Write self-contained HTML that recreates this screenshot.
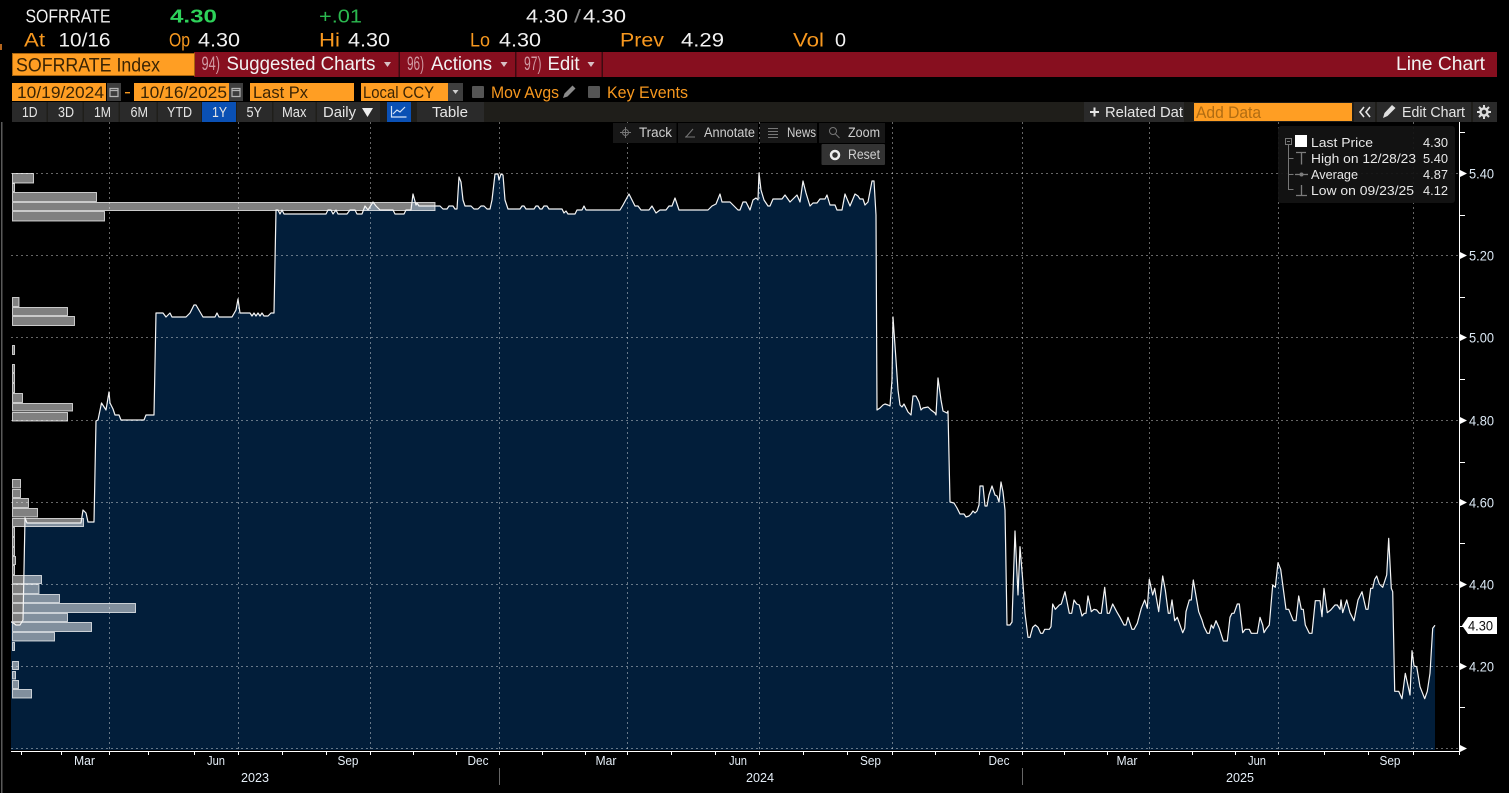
<!DOCTYPE html>
<html><head><meta charset="utf-8"><style>
html,body{margin:0;padding:0;background:#000;width:1509px;height:793px;overflow:hidden}
svg{display:block}
text{font-family:"Liberation Sans",sans-serif}
.o{fill:#f7981f}.w{fill:#f2f2f2}.d{fill:#3a2404}.t{fill:#e6e6e6;font-size:15px}.m{fill:#d09aa3}.c{fill:#cfcfcf;font-size:13.5px}
.l{fill:#e8e8e8;font-size:13px}.a{fill:#e4edf6;font-size:13px}.y{fill:#d9e6f2;font-size:14px}
</style></head><body>
<svg width="1509" height="793" viewBox="0 0 1509 793" xmlns="http://www.w3.org/2000/svg">
<rect width="1509" height="793" fill="#000"/>
<rect x="1" y="122" width="1.5" height="671" fill="#5a5a5a"/>
<rect x="0" y="44" width="2" height="6" fill="#b5651d"/>

<!-- header rows -->
<g font-size="18.500">
<text x="25.500" y="22.500" class="w" textLength="85" lengthAdjust="spacingAndGlyphs">SOFRRATE</text>
<text x="170" y="22.500" fill="#2ed25a" font-weight="bold" textLength="47" lengthAdjust="spacingAndGlyphs">4.30</text>
<text x="319" y="22.500" fill="#2bb84f" textLength="43" lengthAdjust="spacingAndGlyphs">+.01</text>
<text x="526" y="22.500" class="w" textLength="42" lengthAdjust="spacingAndGlyphs">4.30</text>
<text x="574" y="22.500" fill="#888" textLength="7" lengthAdjust="spacingAndGlyphs">/</text>
<text x="583" y="22.500" class="w" textLength="43" lengthAdjust="spacingAndGlyphs">4.30</text>
</g>
<g font-size="19.500">
<text x="24" y="46.500" class="o" textLength="21" lengthAdjust="spacingAndGlyphs">At</text>
<text x="58.500" y="46.500" class="w" textLength="52" lengthAdjust="spacingAndGlyphs">10/16</text>
<text x="169" y="46.500" class="o" textLength="21" lengthAdjust="spacingAndGlyphs">Op</text>
<text x="198" y="46.500" class="w" textLength="42" lengthAdjust="spacingAndGlyphs">4.30</text>
<text x="319" y="46.500" class="o" textLength="21" lengthAdjust="spacingAndGlyphs">Hi</text>
<text x="348" y="46.500" class="w" textLength="42" lengthAdjust="spacingAndGlyphs">4.30</text>
<text x="470" y="46.500" class="o" textLength="20" lengthAdjust="spacingAndGlyphs">Lo</text>
<text x="499" y="46.500" class="w" textLength="42" lengthAdjust="spacingAndGlyphs">4.30</text>
<text x="620" y="46.500" class="o" textLength="44" lengthAdjust="spacingAndGlyphs">Prev</text>
<text x="681" y="46.500" class="w" textLength="43" lengthAdjust="spacingAndGlyphs">4.29</text>
<text x="793" y="46.500" class="o" textLength="31" lengthAdjust="spacingAndGlyphs">Vol</text>
<text x="835" y="46.500" class="w" textLength="11" lengthAdjust="spacingAndGlyphs">0</text>
</g>

<!-- red band -->
<rect x="194" y="52" width="1303" height="25" fill="#870f1f"/>
<rect x="398.500" y="52" width="1.500" height="25" fill="#3d0a10"/>
<rect x="515" y="52" width="1.500" height="25" fill="#3d0a10"/>
<rect x="601.500" y="52" width="1.500" height="25" fill="#3d0a10"/>
<rect x="12" y="53" width="183" height="23" fill="#ff9e23"/>
<rect x="12.500" y="53.500" width="182" height="22" fill="none" stroke="#a8650f"/>
<g font-size="19.500">
<text x="16" y="71.500" class="d" textLength="144" lengthAdjust="spacingAndGlyphs">SOFRRATE Index</text>
<text x="201.500" y="70" class="m" textLength="18.500" lengthAdjust="spacingAndGlyphs">94)</text>
<text x="226.500" y="70" class="w" textLength="149" lengthAdjust="spacingAndGlyphs">Suggested Charts</text>
<text x="407" y="70" class="m" textLength="17" lengthAdjust="spacingAndGlyphs">96)</text>
<text x="431" y="70" class="w" textLength="61" lengthAdjust="spacingAndGlyphs">Actions</text>
<text x="524" y="70" class="m" textLength="17.500" lengthAdjust="spacingAndGlyphs">97)</text>
<text x="547.500" y="70" class="w" textLength="32" lengthAdjust="spacingAndGlyphs">Edit</text>
<text x="1396" y="70" class="w" textLength="89" lengthAdjust="spacingAndGlyphs">Line Chart</text>
</g>
<path d="M384,62h7l-3.500,5zM500.500,62h7l-3.500,5zM587.500,62h7l-3.500,5z" fill="#d8c0c4"/>

<!-- row 3 -->
<g fill="#ff9e23">
<rect x="12" y="83" width="94" height="18"/>
<rect x="134" y="83" width="95" height="18"/>
<rect x="250" y="83" width="104" height="18"/>
<rect x="361" y="83" width="87" height="18"/>
</g>
<rect x="107" y="83" width="14" height="18" fill="#3e3e3e"/>
<rect x="229" y="83" width="14" height="18" fill="#3e3e3e"/>
<rect x="448" y="83" width="15" height="18" fill="#3e3e3e"/>
<path d="M110,88.500h8v8h-8zM110,90.500h8M232,88.500h8v8h-8zM232,90.500h8" fill="none" stroke="#b5b5b5" stroke-width="1.200"/>
<path d="M452.500,90h6l-3,4z" fill="#cfcfcf"/>
<rect x="125" y="92" width="5" height="1.400" fill="#f7981f"/>
<rect x="472" y="86" width="12" height="12" rx="1" fill="#555"/>
<rect x="588" y="86" width="12" height="12" rx="1" fill="#555"/>
<path d="M563,98l1.500,-4.500l8,-8l3,3l-8,8z" fill="#8a8a8a"/>
<g font-size="17">
<text x="17" y="98" class="d" textLength="87" lengthAdjust="spacingAndGlyphs">10/19/2024</text>
<text x="140" y="98" class="d" textLength="87" lengthAdjust="spacingAndGlyphs">10/16/2025</text>
<text x="253" y="98" class="d" textLength="55" lengthAdjust="spacingAndGlyphs">Last Px</text>
<text x="363" y="98" class="d" textLength="71" lengthAdjust="spacingAndGlyphs">Local CCY</text>
<text x="491" y="98" class="o" textLength="68" lengthAdjust="spacingAndGlyphs">Mov Avgs</text>
<text x="607" y="98" class="o" textLength="81" lengthAdjust="spacingAndGlyphs">Key Events</text>
</g>

<!-- row 4 -->
<rect x="12" y="102" width="1485" height="20" fill="#1f1e1a"/>
<g fill="#2a2a2a">
<rect x="12" y="102" width="34.500" height="20"/><rect x="48" y="102" width="34.500" height="20"/>
<rect x="84" y="102" width="34.500" height="20"/><rect x="120" y="102" width="36.500" height="20"/>
<rect x="158" y="102" width="43" height="20"/><rect x="237" y="102" width="35" height="20"/>
<rect x="273.500" y="102" width="42" height="20"/><rect x="317" y="102" width="63" height="20"/>
<rect x="417" y="102" width="67" height="20"/>
</g>
<rect x="202" y="102" width="34" height="20" fill="#0a50b4"/>
<rect x="387" y="102" width="24" height="20" fill="#0a50b4"/>
<path d="M391.500,106v11h15M393,114l4,-4l3,2l5,-5" fill="none" stroke="#d5e4f7" stroke-width="1.200"/>
<g class="t">
<text x="22" y="117" textLength="15.500" lengthAdjust="spacingAndGlyphs">1D</text>
<text x="58" y="117" textLength="16" lengthAdjust="spacingAndGlyphs">3D</text>
<text x="94" y="117" textLength="17" lengthAdjust="spacingAndGlyphs">1M</text>
<text x="130.500" y="117" textLength="17.500" lengthAdjust="spacingAndGlyphs">6M</text>
<text x="167" y="117" textLength="25" lengthAdjust="spacingAndGlyphs">YTD</text>
<text x="212" y="117" textLength="15" lengthAdjust="spacingAndGlyphs">1Y</text>
<text x="246.500" y="117" textLength="15.500" lengthAdjust="spacingAndGlyphs">5Y</text>
<text x="282" y="117" textLength="24.500" lengthAdjust="spacingAndGlyphs">Max</text>
<text x="323" y="117" textLength="33" lengthAdjust="spacingAndGlyphs">Daily</text>
<text x="432" y="117" textLength="36" lengthAdjust="spacingAndGlyphs">Table</text>
</g>
<path d="M362,108h11l-5.500,9z" fill="#eee"/>

<rect x="1084" y="102" width="100" height="20" fill="#2a2a2a"/>
<rect x="1354" y="102" width="21" height="20" fill="#2a2a2a"/>
<rect x="1377" y="102" width="94" height="20" fill="#2a2a2a"/>
<rect x="1473" y="102" width="24" height="20" fill="#2a2a2a"/>
<path d="M1090,112h9M1094.500,107.500v9" stroke="#e6e6e6" stroke-width="2" fill="none"/>
<text x="1105" y="117" class="t" textLength="78" lengthAdjust="spacingAndGlyphs">Related Dat</text>
<rect x="1194" y="103" width="158" height="18" fill="#ff9e23"/>
<text x="1196" y="118" font-size="17" fill="#b06c12" textLength="65" lengthAdjust="spacingAndGlyphs">Add Data</text>
<path d="M1364,107l-4,5l4,5M1370,107l-4,5l4,5" fill="none" stroke="#e6e6e6" stroke-width="1.600"/>
<path d="M1383,118l1.500,-5l7.500,-8l3.500,3l-8,8z" fill="#e0e0e0"/>
<text x="1402" y="117" class="t" textLength="63" lengthAdjust="spacingAndGlyphs">Edit Chart</text>
<circle cx="1484" cy="112" r="3.500" fill="none" stroke="#dcdcdc" stroke-width="2.500"/>
<path d="M1484,105v3.500M1484,115.500v3.500M1477,112h3.500M1487.500,112h3.500M1479,107l2.500,2.500M1486.500,114.500l2.500,2.500M1489,107l-2.500,2.500M1481.500,114.500l-2.500,2.500" stroke="#dcdcdc" stroke-width="2"/>

<!-- area fill -->
<path fill="#021e3a" d="M11,750L11,622L12,622L16,625L20,625L23,620L24,570L25,518L27,523L81,523L83,510L86,513L88,522L94,522L96,421L98,420L101.500,403L106,410L109,392L110,403L113,409L115,415L119,415L121,420L144,420L146,415L154,415L156,313L163,313L166,317L170,313L172,317L186,317L190,313L194,305L196,305L203,317L215,317L217,313L219,317L232,317L236,310L238,299L240,313L250,313L252,316L254,313L256,316L258,313L260,316L262,313L264,316L268,316L271,313L274,313L276,210L278,210L280,214L282,210L284,214L326,214L328,210L331,210L333,214L336,210L338,214L347,214L350,210L355,210L357,214L362,214L365,206L368,210L373,202L376,206L380,210L393,210L395,214L404,214L406,210L411,210L413,194L416,205L417,203L419,206L437,206L440,206L443,209L447,209L449,206L453,206L455,209L457,209L459,177L461,182L463,200L465,206L471,206L474,209L478,209L481,206L484,206L487,209L490,209L492,200L495,174L498,174L499,180L501,174L503,175L505,200L508,209L520,209L522,206L524,206L526,209L534,209L536,206L538,206L540,209L542,209L544,206L547,206L549,209L562,209L564,213L566,211L568,214L575,214L577,210L582,210L584,206L586,210L620,210L623,205L629,194L632,200L635,206L638,206L641,210L649,210L652,206L656,213L660,210L666,210L669,206L672,206L675,198L679,210L708,210L712,206L716,204L720,194L722,202L730,202L734,206L738,210L740,210L743,202L746,202L750,210L753,200L756,198L758,200L759,173L761,190L764,200L768,206L770,206L773,199L782,199L785,195L790,202L797,195L800,202L803,181L806,193L810,206L813,203L817,203L820,199L825,199L827,195L830,205L835,205L837,210L842,210L845,194L850,206L855,194L858,196L860,199L863,199L865,205L868,202L872,181L874,181L876,215L877,410L880,408L883,405L885,404L888,405L890,406L892,380L893,317L896,360L898,390L900,405L902,407L904,404L908,412L911,415L913,396L916,396L919,402L921,410L923,408L928,407L931,410L935,413L936,415L938,378L941,400L943,411L947,413L948,411L950,502L954,503L957,508L960,514L964,514L966,517L969,516L971,514L973,511L975,513L977,511L979,505L980,486L983,486L985,506L987,506L989,495L992,486L995,495L997,496L999,502L1001,482L1003,492L1005,510L1007,625L1010,625L1012,622L1015,531L1018,595L1020,546.700L1022.700,580L1025,613.300L1028,637.300L1030,637.300L1032.700,627.300L1035.300,625L1038,627.300L1040.700,633.300L1042.700,633.300L1044.700,629.300L1049.300,629.300L1051,626.700L1052.700,604L1055.300,609.300L1059.300,605L1061.300,604L1065,591.700L1069.300,613.300L1071.700,613.300L1074,600L1076.700,604L1079.300,605L1082,616L1084.300,613.300L1086,613.300L1088,596L1091.300,611.700L1094,609.300L1096.700,610L1099.300,613.300L1101.300,613.300L1104.700,587.300L1107.300,613.300L1109.300,613.300L1112.700,604L1116.700,611.700L1120,617.300L1124,625L1126,625L1128,617.300L1132,629.300L1134,629.300L1137.300,623.300L1141.300,608.300L1144.700,600L1147.300,608.300L1149.300,579.300L1152.700,595L1154.700,588.300L1158.700,611.700L1162.700,576L1165.300,590L1168.300,613.300L1170,613.300L1172,600L1174.700,620.700L1177.300,617.300L1182.700,632.700L1184.700,628.300L1186,611.700L1189.300,600L1191.300,600L1193.300,580L1198.700,611.700L1202,620L1204,626.700L1207.300,633.300L1209.300,633.300L1211.300,625L1213.300,628.300L1216,620.700L1219.300,628.300L1223.300,641L1227.300,641L1230,617.300L1232,613.300L1234,613.300L1237.300,604L1239.300,604L1242.700,632.700L1245.300,629.300L1249.300,629.300L1251.300,633.300L1257.300,633.300L1260,617.300L1262.700,625L1264,632.700L1266,629.300L1269.300,625L1272.700,585L1275.300,587.300L1278,562.700L1280.700,569.300L1286,609.300L1288.700,609.300L1293.300,620.700L1296,620.700L1298.700,596L1301.300,609.300L1303.300,609.300L1305.300,625L1309.300,633.300L1312,633.300L1315.300,600.700L1320,600.700L1322,616.700L1324,588.300L1327.300,612.700L1330.700,610L1335,605L1337.300,605L1340,609.300L1341,600L1342.700,612.700L1346.700,600L1350,612.700L1354,620.700L1358,600L1362,591.700L1366,609.300L1368,609.300L1370.700,588.300L1372.700,588.300L1374.700,579.300L1376.700,576L1379.300,584L1382.700,587.300L1385.300,579.300L1386.700,575L1388.700,538.300L1391.300,588.300L1392.700,591.700L1394.700,691.300L1398.700,691.300L1402,698.700L1405.300,673.300L1410,695L1412,650.700L1414,666L1416.700,666.700L1420,686.700L1424.700,698.700L1427.300,691.300L1430,673.300L1432.700,628.300L1435,625.300L1435,750Z"/>

<!-- grid -->
<g stroke="#fff" stroke-opacity=".4" stroke-dasharray="2 3" fill="none">
<path d="M11,173.500H1459M11,255.500H1459M11,337.500H1459M11,420.500H1459M11,502.500H1459M11,584.500H1459M11,666.500H1459M11,748.500H1459"/>
<path d="M109.500,122V751M238.500,122V751M370.500,122V751M499.500,122V751M627.500,122V751M759.500,122V751M892.500,122V751M1022.500,122V751M1149.500,122V751M1278.500,122V751M1413.500,122V751"/>
</g>

<!-- histogram -->
<g fill="#fff" fill-opacity=".5" stroke="#fff" stroke-opacity=".72" stroke-width="1">
<rect x="12.500" y="173.500" width="21" height="9.500"/>
<rect x="12.500" y="183.500" width="2" height="8"/>
<rect x="12.500" y="192.500" width="84" height="9"/>
<rect x="12.500" y="202.500" width="422.500" height="8"/>
<rect x="12.500" y="211.500" width="92" height="9.500"/>
<rect x="12.500" y="297.500" width="6.500" height="9"/>
<rect x="12.500" y="307.500" width="55" height="8"/>
<rect x="12.500" y="316.500" width="62" height="9"/>
<rect x="12.500" y="345.500" width="2" height="9"/>
<rect x="12.500" y="364.500" width="2" height="8"/>
<rect x="12.500" y="373.500" width="2" height="9"/>
<rect x="12.500" y="383.500" width="2" height="9"/>
<rect x="12.500" y="393.500" width="10" height="9"/>
<rect x="12.500" y="403.500" width="60" height="7.500"/>
<rect x="12.500" y="412.500" width="55" height="8.500"/>
<rect x="12.500" y="479.500" width="8" height="8.500"/>
<rect x="12.500" y="489.500" width="8" height="8"/>
<rect x="12.500" y="498.500" width="16" height="9"/>
<rect x="12.500" y="508.500" width="25" height="8.500"/>
<rect x="12.500" y="518.500" width="71" height="8"/>
<rect x="12.500" y="527.500" width="2" height="9"/>
<rect x="12.500" y="537.500" width="2" height="9"/>
<rect x="12.500" y="547.500" width="2" height="8"/>
<rect x="12.500" y="556.500" width="3" height="8"/>
<rect x="12.500" y="565.500" width="2" height="9"/>
<rect x="12.500" y="575.500" width="29" height="8"/>
<rect x="12.500" y="584.500" width="26.500" height="9"/>
<rect x="12.500" y="594.500" width="47" height="8"/>
<rect x="12.500" y="603.500" width="123" height="9"/>
<rect x="12.500" y="613.500" width="55" height="8"/>
<rect x="12.500" y="622.500" width="79" height="9"/>
<rect x="12.500" y="632.500" width="42" height="8.500"/>
<rect x="12.500" y="642.500" width="2" height="8"/>
<rect x="12.500" y="661.500" width="6" height="8"/>
<rect x="12.500" y="671.500" width="3" height="7.500"/>
<rect x="12.500" y="680.500" width="6" height="8"/>
<rect x="12.500" y="689.500" width="19" height="8.500"/>
</g>

<!-- price line -->
<path fill="none" stroke="#f4f4f4" stroke-width="1.200" stroke-linejoin="round" d="M11,622L12,622L16,625L20,625L23,620L24,570L25,518L27,523L81,523L83,510L86,513L88,522L94,522L96,421L98,420L101.500,403L106,410L109,392L110,403L113,409L115,415L119,415L121,420L144,420L146,415L154,415L156,313L163,313L166,317L170,313L172,317L186,317L190,313L194,305L196,305L203,317L215,317L217,313L219,317L232,317L236,310L238,299L240,313L250,313L252,316L254,313L256,316L258,313L260,316L262,313L264,316L268,316L271,313L274,313L276,210L278,210L280,214L282,210L284,214L326,214L328,210L331,210L333,214L336,210L338,214L347,214L350,210L355,210L357,214L362,214L365,206L368,210L373,202L376,206L380,210L393,210L395,214L404,214L406,210L411,210L413,194L416,205L417,203L419,206L437,206L440,206L443,209L447,209L449,206L453,206L455,209L457,209L459,177L461,182L463,200L465,206L471,206L474,209L478,209L481,206L484,206L487,209L490,209L492,200L495,174L498,174L499,180L501,174L503,175L505,200L508,209L520,209L522,206L524,206L526,209L534,209L536,206L538,206L540,209L542,209L544,206L547,206L549,209L562,209L564,213L566,211L568,214L575,214L577,210L582,210L584,206L586,210L620,210L623,205L629,194L632,200L635,206L638,206L641,210L649,210L652,206L656,213L660,210L666,210L669,206L672,206L675,198L679,210L708,210L712,206L716,204L720,194L722,202L730,202L734,206L738,210L740,210L743,202L746,202L750,210L753,200L756,198L758,200L759,173L761,190L764,200L768,206L770,206L773,199L782,199L785,195L790,202L797,195L800,202L803,181L806,193L810,206L813,203L817,203L820,199L825,199L827,195L830,205L835,205L837,210L842,210L845,194L850,206L855,194L858,196L860,199L863,199L865,205L868,202L872,181L874,181L876,215L877,410L880,408L883,405L885,404L888,405L890,406L892,380L893,317L896,360L898,390L900,405L902,407L904,404L908,412L911,415L913,396L916,396L919,402L921,410L923,408L928,407L931,410L935,413L936,415L938,378L941,400L943,411L947,413L948,411L950,502L954,503L957,508L960,514L964,514L966,517L969,516L971,514L973,511L975,513L977,511L979,505L980,486L983,486L985,506L987,506L989,495L992,486L995,495L997,496L999,502L1001,482L1003,492L1005,510L1007,625L1010,625L1012,622L1015,531L1018,595L1020,546.700L1022.700,580L1025,613.300L1028,637.300L1030,637.300L1032.700,627.300L1035.300,625L1038,627.300L1040.700,633.300L1042.700,633.300L1044.700,629.300L1049.300,629.300L1051,626.700L1052.700,604L1055.300,609.300L1059.300,605L1061.300,604L1065,591.700L1069.300,613.300L1071.700,613.300L1074,600L1076.700,604L1079.300,605L1082,616L1084.300,613.300L1086,613.300L1088,596L1091.300,611.700L1094,609.300L1096.700,610L1099.300,613.300L1101.300,613.300L1104.700,587.300L1107.300,613.300L1109.300,613.300L1112.700,604L1116.700,611.700L1120,617.300L1124,625L1126,625L1128,617.300L1132,629.300L1134,629.300L1137.300,623.300L1141.300,608.300L1144.700,600L1147.300,608.300L1149.300,579.300L1152.700,595L1154.700,588.300L1158.700,611.700L1162.700,576L1165.300,590L1168.300,613.300L1170,613.300L1172,600L1174.700,620.700L1177.300,617.300L1182.700,632.700L1184.700,628.300L1186,611.700L1189.300,600L1191.300,600L1193.300,580L1198.700,611.700L1202,620L1204,626.700L1207.300,633.300L1209.300,633.300L1211.300,625L1213.300,628.300L1216,620.700L1219.300,628.300L1223.300,641L1227.300,641L1230,617.300L1232,613.300L1234,613.300L1237.300,604L1239.300,604L1242.700,632.700L1245.300,629.300L1249.300,629.300L1251.300,633.300L1257.300,633.300L1260,617.300L1262.700,625L1264,632.700L1266,629.300L1269.300,625L1272.700,585L1275.300,587.300L1278,562.700L1280.700,569.300L1286,609.300L1288.700,609.300L1293.300,620.700L1296,620.700L1298.700,596L1301.300,609.300L1303.300,609.300L1305.300,625L1309.300,633.300L1312,633.300L1315.300,600.700L1320,600.700L1322,616.700L1324,588.300L1327.300,612.700L1330.700,610L1335,605L1337.300,605L1340,609.300L1341,600L1342.700,612.700L1346.700,600L1350,612.700L1354,620.700L1358,600L1362,591.700L1366,609.300L1368,609.300L1370.700,588.300L1372.700,588.300L1374.700,579.300L1376.700,576L1379.300,584L1382.700,587.300L1385.300,579.300L1386.700,575L1388.700,538.300L1391.300,588.300L1392.700,591.700L1394.700,691.300L1398.700,691.300L1402,698.700L1405.300,673.300L1410,695L1412,650.700L1414,666L1416.700,666.700L1420,686.700L1424.700,698.700L1427.300,691.300L1430,673.300L1432.700,628.300L1435,625.300"/>

<!-- axes -->
<path d="M11,751.500H1460M1459.500,122V752" stroke="#fff" stroke-width="1" fill="none"/>
<path stroke="#fff" fill="none" d="M21.500,752v3M61.500,752v3M109.500,752v3M148.500,752v3M194.500,752v3M238.500,752v3M282.500,752v3M326.500,752v3M370.500,752v3M413.500,752v3M456.500,752v3M499.500,752v3M542.500,752v3M585.500,752v3M627.500,752v3M671.500,752v3M715.500,752v3M759.500,752v3M803.500,752v3M847.500,752v3M892.500,752v3M935.500,752v3M979.500,752v3M1022.500,752v3M1064.500,752v3M1107.500,752v3M1149.500,752v3M1192.500,752v3M1235.500,752v3M1278.500,752v3M1324.500,752v3M1368.500,752v3M1413.500,752v3M1459.500,752v3"/>
<path stroke="#fff" fill="none" d="M1460,132.500h5M1460,215.500h5M1460,297.500h5M1460,379.500h5M1460,462.500h5M1460,543.500h5M1460,626.500h5M1460,707.500h5"/>
<path fill="#fff" d="M1460,170l7,3.500l-7,3.500zM1460,252l7,3.500l-7,3.500zM1460,334l7,3.500l-7,3.500zM1460,417l7,3.500l-7,3.500zM1460,499l7,3.500l-7,3.500zM1460,581l7,3.500l-7,3.500zM1460,663l7,3.500l-7,3.500zM1460,745l7,3.500l-7,3.500z"/>
<g class="y">
<text x="1469" y="178.500" textLength="25" lengthAdjust="spacingAndGlyphs">5.40</text>
<text x="1469" y="260.500" textLength="25" lengthAdjust="spacingAndGlyphs">5.20</text>
<text x="1469" y="342.500" textLength="25" lengthAdjust="spacingAndGlyphs">5.00</text>
<text x="1469" y="425.500" textLength="25" lengthAdjust="spacingAndGlyphs">4.80</text>
<text x="1469" y="507.500" textLength="25" lengthAdjust="spacingAndGlyphs">4.60</text>
<text x="1469" y="589.500" textLength="25" lengthAdjust="spacingAndGlyphs">4.40</text>
<text x="1469" y="671.500" textLength="25" lengthAdjust="spacingAndGlyphs">4.20</text>
</g>
<path d="M1462,625.500l6,-8.500h29v17h-29z" fill="#fff"/>
<text x="1468" y="630.500" font-size="14" fill="#111" textLength="25" lengthAdjust="spacingAndGlyphs">4.30</text>

<g class="a">
<text x="74" y="765" textLength="21" lengthAdjust="spacingAndGlyphs">Mar</text>
<text x="207" y="765" textLength="18" lengthAdjust="spacingAndGlyphs">Jun</text>
<text x="337.500" y="765" textLength="21" lengthAdjust="spacingAndGlyphs">Sep</text>
<text x="467.500" y="765" textLength="21" lengthAdjust="spacingAndGlyphs">Dec</text>
<text x="595.500" y="765" textLength="21" lengthAdjust="spacingAndGlyphs">Mar</text>
<text x="729" y="765" textLength="18" lengthAdjust="spacingAndGlyphs">Jun</text>
<text x="860" y="765" textLength="21" lengthAdjust="spacingAndGlyphs">Sep</text>
<text x="988.500" y="765" textLength="21" lengthAdjust="spacingAndGlyphs">Dec</text>
<text x="1116.500" y="765" textLength="21" lengthAdjust="spacingAndGlyphs">Mar</text>
<text x="1248" y="765" textLength="18" lengthAdjust="spacingAndGlyphs">Jun</text>
<text x="1379.500" y="765" textLength="21" lengthAdjust="spacingAndGlyphs">Sep</text>
<text x="241" y="782" textLength="28" lengthAdjust="spacingAndGlyphs">2023</text>
<text x="746" y="782" textLength="28" lengthAdjust="spacingAndGlyphs">2024</text>
<text x="1226" y="782" textLength="28" lengthAdjust="spacingAndGlyphs">2025</text>
</g>
<path d="M499.500,768v17M1022.500,768v17" stroke="#666"/>

<!-- chart toolbar -->
<g fill="#171717">
<rect x="613" y="123" width="63.500" height="20"/><rect x="678" y="123" width="80" height="20"/>
<rect x="760" y="123" width="57" height="20"/><rect x="819" y="123" width="66" height="20"/>
</g>
<rect x="821.500" y="144" width="63.500" height="21" rx="1" fill="#333"/>
<path d="M625.500,127v11M620,132.500h11" stroke="#777" fill="none"/>
<circle cx="625.500" cy="132.500" r="3" fill="none" stroke="#777"/>
<path d="M686,137l7,-8M685,137h10" stroke="#777" fill="none"/>
<path d="M768,128.500h10M768,131.500h10M768,134.500h10M768,137.500h10" stroke="#777" fill="none"/>
<circle cx="833" cy="131" r="3.500" fill="none" stroke="#777"/><path d="M835.500,134l4,4" stroke="#777"/>
<circle cx="835" cy="155" r="4" fill="none" stroke="#eee" stroke-width="2.500"/>
<g class="c">
<text x="639" y="137" textLength="33" lengthAdjust="spacingAndGlyphs">Track</text>
<text x="704" y="137" textLength="51" lengthAdjust="spacingAndGlyphs">Annotate</text>
<text x="787" y="137" textLength="29" lengthAdjust="spacingAndGlyphs">News</text>
<text x="848" y="137" textLength="32" lengthAdjust="spacingAndGlyphs">Zoom</text>
<text x="848" y="159" textLength="32" lengthAdjust="spacingAndGlyphs">Reset</text>
</g>

<!-- legend -->
<rect x="1278" y="126" width="177" height="77" rx="3" fill="#131313" fill-opacity=".93"/>
<rect x="1285.500" y="138.500" width="6" height="6" fill="none" stroke="#777"/>
<path d="M1287,141.500h3M1288.500,145v44.500h5M1288.500,158.500h5M1288.500,174.500h5" stroke="#777" fill="none"/>
<rect x="1295" y="135" width="12" height="12" fill="#fff"/>
<path d="M1296,152.500h10M1301.500,152.500v12M1295,174.500h13M1301.500,185v10M1296,195.500h11" stroke="#7c7c7c" stroke-width="1.300" fill="none"/>
<circle cx="1301.500" cy="174.500" r="2" fill="#7c7c7c"/>
<g class="l">
<text x="1311" y="147" textLength="62" lengthAdjust="spacingAndGlyphs">Last Price</text>
<text x="1311" y="163" textLength="105" lengthAdjust="spacingAndGlyphs">High on 12/28/23</text>
<text x="1311" y="179" textLength="47" lengthAdjust="spacingAndGlyphs">Average</text>
<text x="1311" y="195" textLength="103" lengthAdjust="spacingAndGlyphs">Low on 09/23/25</text>
<text x="1423" y="147" textLength="25" lengthAdjust="spacingAndGlyphs">4.30</text>
<text x="1423" y="163" textLength="25" lengthAdjust="spacingAndGlyphs">5.40</text>
<text x="1423" y="179" textLength="25" lengthAdjust="spacingAndGlyphs">4.87</text>
<text x="1423" y="195" textLength="25" lengthAdjust="spacingAndGlyphs">4.12</text>
</g>
</svg>
</body></html>
